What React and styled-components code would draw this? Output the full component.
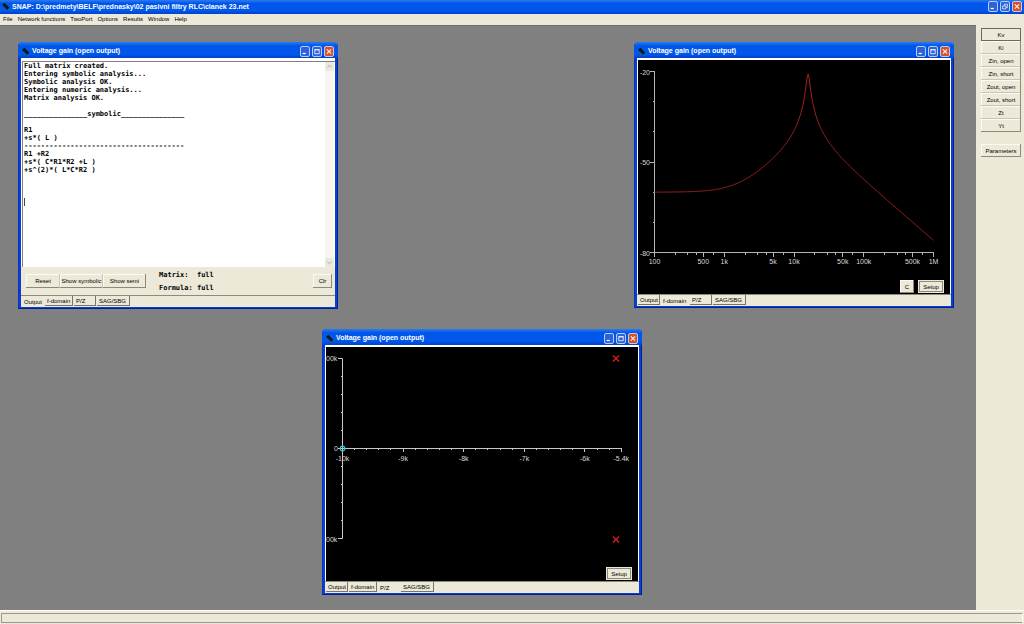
import styled, { createGlobalStyle, css } from "styled-components";

const logText = `Full matrix created.
Entering symbolic analysis...
Symbolic analysis OK.
Entering numeric analysis...
Matrix analysis OK.

_______________symbolic_______________

R1
+s*( L )
--------------------------------------
R1 +R2
+s*( C*R1*R2 +L )
+s^(2)*( L*C*R2 )
`;

const menuItems = ["File", "Network functions", "TwoPort", "Options", "Results", "Window", "Help"];
const functionNames = ["Kv", "Ki", "Zin, open", "Zin, short", "Zout, open", "Zout, short", "Zt", "Yt"];
const tabs = [
  { name: "Output", width: 22 },
  { name: "f-domain", width: 28 },
  { name: "P/Z", width: 22 },
  { name: "SAG/SBG", width: 33 },
];

const ChipIcon = () => (
  <IconSvg viewBox="0 0 10 10" aria-hidden="true">
    <path d="M1 4.5 4.5 1.2M2.8 6.4 6.3 3M4.6 8.2 8.1 4.8M6.2 9.6 9.6 6.6" stroke="#2f7f86" strokeWidth="0.8" />
    <path d="M1.2 3.2 3.6 0.8 9.2 6.4 6.8 9z" fill="#06110c" />
    <path d="M2.6 3.2 7.2 7.8" stroke="#3b5b45" strokeWidth="0.6" />
  </IconSvg>
);

const WindowButtons = ({ restore }) => (
  <ButtonRow>
    <CaptionButton aria-label="Minimize">
      <svg viewBox="0 0 10 10"><path d="M2 7.5h4" stroke="#fff" strokeWidth="1.6" /></svg>
    </CaptionButton>
    <CaptionButton aria-label={restore ? "Restore" : "Maximize"}>
      <svg viewBox="0 0 10 10" fill="none" stroke="#fff">
        {restore ? (
          <path d="M4 4V2.2h4v4H6.5M2 4.4h4.2v3.6H2z" strokeWidth="0.9" />
        ) : (
          <path d="M2 3h6M2.2 2.6v5.2h5.6V2.6z" strokeWidth="1" />
        )}
      </svg>
    </CaptionButton>
    <CaptionButton $close aria-label="Close">
      <svg viewBox="0 0 10 10"><path d="m2.3 2.3 5.4 5.4m0-5.4L2.3 7.7" stroke="#fff" strokeWidth="1.3" /></svg>
    </CaptionButton>
  </ButtonRow>
);

const ChildWindow = ({ left, top, height, active, children }) => (
  <Frame $left={left} $top={top} $height={height}>
    <ChildTitle>
      <ChipIcon />
      <TitleText>Voltage gain (open output)</TitleText>
      <WindowButtons />
    </ChildTitle>
    <Client>
      {children}
      <TabBar>
        {tabs.map((tab) => (
          <Tab key={tab.name} $width={tab.width} $active={tab.name === active}>
            {tab.name}
          </Tab>
        ))}
      </TabBar>
    </Client>
  </Frame>
);

const OutputPage = () => (
  <>
    <LogArea>
      <Log aria-label="Analysis log" defaultValue={logText} spellCheck={false} />
      <Caret />
      <ScrollBar>
        <ScrollButton disabled aria-label="Scroll up">
          <svg viewBox="0 0 8 8"><path d="m2 5 2-2 2 2" fill="none" stroke="#c5c2b2" /></svg>
        </ScrollButton>
        <ScrollButton disabled aria-label="Scroll down">
          <svg viewBox="0 0 8 8"><path d="m2 3 2 2 2-2" fill="none" stroke="#c5c2b2" /></svg>
        </ScrollButton>
      </ScrollBar>
    </LogArea>
    <Controls>
      <ButtonGroup>
        <PushButton $width={34}>Reset</PushButton>
        <PushButton $width={43}>Show symbolic</PushButton>
        <PushButton $width={43}>Show semi</PushButton>
      </ButtonGroup>
      <Modes>
        <span>{"Matrix:  full"}</span>
        <span>Formula: full</span>
      </Modes>
      <ClearButton $width={19}>Clr</ClearButton>
    </Controls>
  </>
);

// log frequency axis, 100 Hz .. 1 MHz
const freqX = (f) => 16.5 + (Math.log10(f) - 2) * 69.75;
const gainY = (db) => 11.5 + (-20 - db) * 3.0167;

// one real zero at -10k, complex pole pair at -5.5k +- j100k, -60 dB at DC
const gain = (f) => {
  const w = 2 * Math.PI * f;
  const num = Math.hypot(1, w / 1e4);
  const den = Math.hypot(1 - (w / 1e5) ** 2, (0.11 * w) / 1e5);
  return -60 + 20 * Math.log10(num / den);
};

const curve = Array.from({ length: 559 }, (_, i) => {
  const f = 10 ** (2 + i / 139.5);
  return `${freqX(f).toFixed(2)},${gainY(gain(f)).toFixed(2)}`;
}).join(" ");

const freqTicks = [100, 1e3, 1e4, 1e5].flatMap((d) => [1, 2, 3, 4, 5, 7].map((m) => d * m)).concat(1e6);
const freqLabels = [
  [100, "100"],
  [500, "500"],
  [1e3, "1k"],
  [5e3, "5k"],
  [1e4, "10k"],
  [5e4, "50k"],
  [1e5, "100k"],
  [5e5, "500k"],
  [1e6, "1M"],
];
const isMajor = (f) => freqLabels.some(([value]) => value === f);

const FrequencyPage = () => (
  <PlotArea>
    <Plot viewBox="0 0 312 234" role="img" aria-label="Gain over frequency">
      <g stroke="#b4b4b4">
        <path d="M16.5 11v181.5H296" fill="none" />
        {[-20, -30, -40, -50, -60, -70, -80].map((db) => {
          const y = Math.round(gainY(db) - 0.5) + 0.5;
          return <path key={db} d={`M${(db + 20) % 30 === 0 ? 12 : 15} ${y}H17`} />;
        })}
        {freqTicks.map((f) => {
          const x = Math.round(freqX(f) - 0.5) + 0.5;
          return <path key={f} d={`M${x} 192V${isMajor(f) ? 197 : 195}`} />;
        })}
      </g>
      <polyline points={curve} fill="none" stroke="#a82222" />
      {[-20, -50, -80].map((db) => (
        <AxisText key={db} x="12" y={gainY(db) + 3} textAnchor="end">{db}</AxisText>
      ))}
      {freqLabels.map(([f, label]) => (
        <AxisText key={f} x={freqX(f)} y="204" textAnchor="middle">{label}</AxisText>
      ))}
    </Plot>
    <PlotButtons>
      <PlotButton $width={14}>C</PlotButton>
      <PlotButton $width={26} $default>Setup</PlotButton>
    </PlotButtons>
  </PlotArea>
);

const reX = (k) => 16.5 + (k + 10) * 60.6;

const PoleZeroPage = () => (
  <PlotArea>
    <Plot viewBox="0 0 312 234" role="img" aria-label="Poles and zeros">
      <g stroke="#c8c8c8" fill="none">
        <path d="M12 11.5h4.5v180H12M12 101.5h283.5" />
        {[1, 2, 3, 4, 6, 7, 8, 9].map((i) => (
          <path key={i} d={`M15 ${11.5 + i * 18}h2`} />
        ))}
        {Array.from({ length: 24 }, (_, i) => {
          const x = Math.round(16 + i * 12.12) + 0.5;
          return <path key={i} d={`M${x} 101V${i % 5 === 0 || i === 23 ? 105 : 103}`} />;
        })}
      </g>
      <circle cx="16.5" cy="101.5" r="2.3" fill="none" stroke="#30c8d0" strokeWidth="1.2" />
      <path d="m287 8.5 6 6m0-6-6 6M287 189.5l6 6m0-6-6 6" stroke="#e02020" strokeWidth="1.2" />
      <AxisText x="0" y="14">00k</AxisText>
      <AxisText x="12" y="104" textAnchor="end">0</AxisText>
      <AxisText x="0" y="195">00k</AxisText>
      {[-10, -9, -8, -7, -6, -5.4].map((k) => (
        <AxisText key={k} x={reX(k)} y="114" textAnchor="middle">{`${k}k`}</AxisText>
      ))}
    </Plot>
    <PlotButtons>
      <PlotButton $width={26} $default>Setup</PlotButton>
    </PlotButtons>
  </PlotArea>
);

const App = () => (
  <Page>
    <GlobalStyle />
    <MainTitle>
      <ChipIcon />
      <TitleText>{"SNAP: D:\\predmety\\BELF\\prednasky\\02 pasivni filtry RLC\\clanek 23.net"}</TitleText>
      <WindowButtons restore />
    </MainTitle>
    <MenuBar>
      {menuItems.map((item) => (
        <MenuItem key={item}>{item}</MenuItem>
      ))}
    </MenuBar>
    <Body>
      <Desktop>
        <ChildWindow left={18} top={16} height={267} active="Output">
          <OutputPage />
        </ChildWindow>
        <ChildWindow left={634} top={16} height={266} active="f-domain">
          <FrequencyPage />
        </ChildWindow>
        <ChildWindow left={322} top={303} height={266} active="P/Z">
          <PoleZeroPage />
        </ChildWindow>
      </Desktop>
      <Sidebar>
        <SideGroup>
          {functionNames.map((name) => (
            <SideButton key={name} $pressed={name === "Kv"}>{name}</SideButton>
          ))}
        </SideGroup>
        <SideGroup>
          <SideButton>Parameters</SideButton>
        </SideGroup>
      </Sidebar>
    </Body>
    <StatusBar>
      <StatusPane />
    </StatusBar>
  </Page>
);

export default App;

const GlobalStyle = createGlobalStyle`
  * {
    box-sizing: border-box;
  }
  body {
    margin: 0;
    background: #ece9d8;
    font-family: "Liberation Sans", Arial, sans-serif;
    font-size: 6px;
    color: #000;
  }
  button {
    margin: 0;
    padding: 0;
    border: none;
    font: inherit;
    color: inherit;
    white-space: nowrap;
  }
`;

const raised = css`
  background: #ece9d8;
  box-shadow: inset -1px -1px #8d8a7c, inset 1px 1px #fbfaf4;
`;

const Page = styled.div`
  display: flex;
  flex-direction: column;
  min-height: 100vh;
`;

const TitleBar = styled.header`
  display: flex;
  align-items: center;
  gap: 2px;
  color: #fff;
  background: linear-gradient(#2a7bf0, #0055e8 25%, #0058ee 75%, #0044c8);
`;

const MainTitle = styled(TitleBar)`
  height: 14px;
  padding: 0 2px 1px 1px;
`;

const ChildTitle = styled(TitleBar)`
  height: 16px;
  padding: 2px 4px 0 3px;
  border-radius: 4px 4px 0 0;
`;

const TitleText = styled.h1`
  flex: 1;
  margin: 0;
  font-size: 7px;
  font-weight: 700;
  line-height: 10px;
  white-space: nowrap;
`;

const IconSvg = styled.svg`
  width: 9px;
  height: 9px;
  fill: none;
`;

const ButtonRow = styled.div`
  display: flex;
  gap: 2px;
`;

const CaptionButton = styled.button`
  display: flex;
  width: 10px;
  height: 11px;
  border: 1px solid #b9cdf4;
  border-radius: 2px;
  background: ${({ $close }) => ($close ? "#dd4f28" : "#2c62dc")};

  svg {
    width: 100%;
    height: 100%;
  }
`;

const MenuBar = styled.nav`
  display: flex;
  gap: 5px;
  height: 11px;
  padding: 0 3px 1px;
`;

const MenuItem = styled.button`
  background: none;
`;

const Body = styled.div`
  display: flex;
  flex: 1;
`;

const Desktop = styled.main`
  position: relative;
  flex: 1;
  background: #808080;
  border-top: 1px solid #6e6e6e;
`;

const Frame = styled.section`
  position: absolute;
  left: ${({ $left }) => $left}px;
  top: ${({ $top }) => $top}px;
  display: flex;
  flex-direction: column;
  width: 320px;
  height: ${({ $height }) => $height}px;
  border-radius: 5px 5px 0 0;
  background: #0a3fd0;
  box-shadow: inset -1px -1px #001f9c, inset 1px 0 #0831c8;
`;

const Client = styled.div`
  display: flex;
  flex: 1;
  flex-direction: column;
  margin: 0 3px 2px;
  background: #ece9d8;
`;

const LogArea = styled.div`
  position: relative;
  display: flex;
  flex: 1;
  padding: 1px 1px 0 0;
  background: #fff;
  border: solid #fff;
  border-width: 3px 0 0 1px;
  box-shadow: inset 1px 1px #808080;
`;

const Log = styled.textarea`
  flex: 1;
  padding: 0 0 0 2px;
  border: none;
  outline: none;
  resize: none;
  overflow: hidden;
  background: none;
  font: bold 7px/8px "DejaVu Sans Mono", "Liberation Mono", monospace;
  white-space: pre;
`;

const Caret = styled.span`
  position: absolute;
  left: 2px;
  top: 137px;
  width: 1px;
  height: 8px;
  background: #444;
`;

const ScrollBar = styled.div`
  display: flex;
  flex-direction: column;
  justify-content: space-between;
  width: 9px;
  background: #f6f5f0;
`;

const ScrollButton = styled.button`
  display: flex;
  height: 9px;
  border-radius: 1px;
  background: #ebe9de;

  svg {
    width: 100%;
  }
`;

const Controls = styled.div`
  display: flex;
  align-items: center;
  height: 28px;
  padding: 0 3px 0 5px;
`;

const ButtonGroup = styled.div`
  display: flex;
`;

const PushButton = styled.button`
  ${raised}
  width: ${({ $width }) => $width}px;
  height: 14px;

  ${ButtonGroup} &:not(:last-child) {
    box-shadow: inset -1px 0 #c9c5b4, inset 0 -1px #8d8a7c, inset 1px 1px #fbfaf4;
  }
`;

const ClearButton = styled(PushButton)`
  margin-left: auto;
`;

const Modes = styled.div`
  display: flex;
  flex-direction: column;
  gap: 5px;
  padding-left: 13px;
  font: bold 7px/8px "DejaVu Sans Mono", "Liberation Mono", monospace;
  white-space: pre;
`;

const TabBar = styled.div`
  display: flex;
  flex-shrink: 0;
  gap: 1px;
  height: 12px;
  padding-left: 1px;
  border-top: 1px solid #8d8a7c;
`;

const Tab = styled.button`
  width: ${({ $width }) => $width}px;
  height: ${({ $active }) => ($active ? 11 : 10)}px;
  padding: ${({ $active }) => ($active ? "2px 1px 0 2px" : "0 1px 0 2px")};
  border: solid ${({ $active }) => ($active ? "transparent" : "#77746a")};
  border-width: 0 1px 1px 0;
  background: #ece9d8;
  line-height: 8px;
  text-align: left;
`;

const PlotArea = styled.div`
  position: relative;
  display: flex;
  flex: 1;
  border: solid #fff;
  border-width: 2px 1px 0;
  background: #000;
`;

const Plot = styled.svg`
  width: 100%;
  height: 234px;
`;

const AxisText = styled.text`
  fill: #d8d8d8;
  font-size: 7px;
`;

const PlotButtons = styled.div`
  position: absolute;
  right: 6px;
  bottom: 1px;
  display: flex;
  gap: 4px;
`;

const PlotButton = styled.button`
  ${raised}
  width: ${({ $width }) => $width}px;
  height: 13px;
  ${({ $default }) =>
    $default &&
    css`
      border: 1px solid #ece9d8;
      outline: 1px solid #8d8a7c;
      outline-offset: -2px;
    `}
`;

const Sidebar = styled.aside`
  display: flex;
  flex-direction: column;
  gap: 12px;
  width: 48px;
  padding: 3px 3px 4px 5px;
`;

const SideGroup = styled.div`
  display: flex;
  flex-direction: column;
`;

const SideButton = styled.button`
  ${raised}
  height: 13px;

  &:not(:last-child) {
    box-shadow: inset -1px 0 #8d8a7c, inset 0 -1px #c9c5b4, inset 1px 1px #fbfaf4;
  }
  ${({ $pressed }) => $pressed && "&&& { box-shadow: inset 0 0 0 1px #6b695f; }"}
`;

const StatusBar = styled.footer`
  height: 14px;
  padding: 2px 1px 1px;
  border-top: 1px solid #fff;
`;

const StatusPane = styled.div`
  height: 100%;
  border: 1px solid;
  border-color: #9d9a8c #fff #9d9a8c #9d9a8c;
`;
